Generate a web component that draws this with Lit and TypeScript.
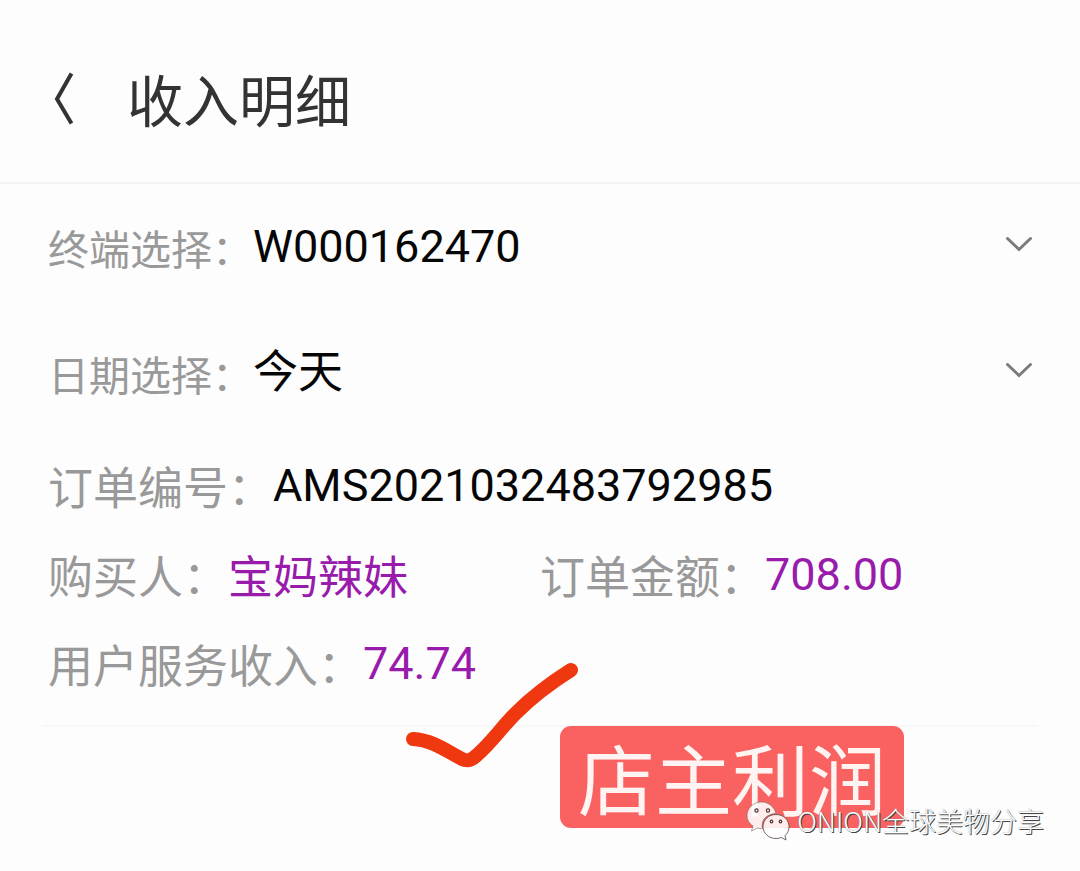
import { LitElement, html, css } from "lit";
import { customElement, property, state } from "lit/decorators.js";

const latinFirst = css`Roboto, "Noto Sans CJK SC", sans-serif`;
const chineseFirst = css`"Noto Sans CJK SC", sans-serif`;

@customElement("filter-select")
class FilterSelect extends LitElement {
  @property() label = "";
  @property({ attribute: false }) options: string[] = [];

  static styles = css`
    :host {
      display: block;
    }
    .row {
      position: relative;
      display: flex;
      align-items: center;
      height: 60px;
    }
    .label {
      flex: none;
      font: 41px/60px ${chineseFirst};
      color: #999;
    }
    .select {
      flex: 1;
      min-width: 0;
      height: 60px;
      margin: 0;
      padding: 0 60px 0 0;
      border: 0;
      background: none;
      appearance: none;
      font: 45px/60px ${latinFirst};
      color: #060606;
    }
    .chevron {
      position: absolute;
      right: 0;
      top: 18px;
      width: 30px;
      height: 18px;
      pointer-events: none;
    }
  `;

  render() {
    return html`
      <div class="row">
        <label class="label" for="field">${this.label}：</label>
        <select class="select" id="field">
          ${this.options.map((o) => html`<option>${o}</option>`)}
        </select>
        <svg class="chevron" viewBox="0 0 30 18" aria-hidden="true">
          <path d="M3.5 3.5 15 14.5 26.5 3.5" fill="none" stroke="#7b7b7b" stroke-width="3" stroke-linecap="round" />
        </svg>
      </div>
    `;
  }
}

@customElement("app-root")
class AppRoot extends LitElement {
  @state() private order = {
    id: "AMS2021032483792985",
    buyer: "宝妈辣妹",
    amount: "708.00",
    income: "74.74",
  };

  static styles = css`
    :host {
      display: block;
      position: relative;
      min-height: 100vh;
      box-sizing: border-box;
      overflow: hidden;
      background: #fdfdfd;
      font-family: ${latinFirst};
    }
    .header {
      display: flex;
      align-items: center;
      gap: 49px;
      height: 182px;
      padding: 0 48px;
      border-bottom: 2px solid #f4f4f4;
    }
    .back {
      margin: 16px 0 0;
      padding: 0;
      border: 0;
      background: none;
      width: 30px;
      height: 60px;
    }
    .back-icon {
      display: block;
      width: 30px;
      height: 60px;
    }
    .title {
      margin: 14px 0 0;
      font: 400 56px/72px ${chineseFirst};
      color: #333;
    }
    .filters {
      display: flex;
      flex-direction: column;
      gap: 66px;
      padding: 33px 46px 0 48px;
    }
    .order {
      position: relative;
      display: flex;
      flex-direction: column;
      gap: 29px;
      margin: 53px 42px 0;
      padding: 0 6px 31px;
      border-bottom: 2px solid #f7f7f7;
      font-size: 45px;
      line-height: 60px;
      color: #060606;
    }
    .line {
      display: grid;
      grid-template-columns: 1fr 1fr;
    }
    .pair {
      display: flex;
      align-items: center;
      height: 60px;
      margin: 0;
      white-space: nowrap;
    }
    .key {
      font-family: ${chineseFirst};
      color: #999;
    }
    .accent {
      color: #981bac;
    }
    .name {
      font-family: ${chineseFirst};
    }
    .tick {
      position: absolute;
      left: 360px;
      top: 200px;
      width: 180px;
      height: 116px;
    }
    .badge {
      position: absolute;
      left: 518px;
      top: 270px;
      padding: 0 18px;
      border-radius: 11px;
      background: #fa6161;
      color: #fff4f1;
      font: 400 77px/102px ${chineseFirst};
      white-space: nowrap;
    }
    .watermark {
      position: absolute;
      right: 36px;
      top: 799px;
      display: flex;
      align-items: center;
      gap: 7px;
      font: 300 27px/44px ${chineseFirst};
      color: #fff;
      text-shadow: 1px 1px 0 #444, 0 0 1px #777;
      white-space: nowrap;
    }
    .wechat {
      width: 44px;
      height: 42px;
    }
  `;

  render() {
    const o = this.order;
    return html`
      <header class="header">
        <button class="back" aria-label="返回">
          <svg class="back-icon" viewBox="0 0 30 60" aria-hidden="true">
            <path d="M23.5 4.5 9 30 23.500 54.500" fill="none" stroke="#333" stroke-width="4" />
          </svg>
        </button>
        <h1 class="title">收入明细</h1>
      </header>
      <section class="filters">
        <filter-select label="终端选择" .options=${["W000162470"]}></filter-select>
        <filter-select label="日期选择" .options=${["今天"]}></filter-select>
      </section>
      <section class="order">
        <p class="pair"><span class="key">订单编号：</span><span>${o.id}</span></p>
        <div class="line">
          <p class="pair"><span class="key">购买人：</span><span class="accent name">${o.buyer}</span></p>
          <p class="pair"><span class="key">订单金额：</span><span class="accent">${o.amount}</span></p>
        </div>
        <p class="pair"><span class="key">用户服务收入：</span><span class="accent">${o.income}</span></p>
        <svg class="tick" viewBox="0 0 180 116" aria-hidden="true">
          <path
            d="M11 83C31 84 46 96 60 103C66 106 70 104 75 99C89 87 99 72 114 57C131 40 150 26 169 14"
            fill="none" stroke="#ef3710" stroke-width="14" stroke-linecap="round" stroke-linejoin="round"
          />
        </svg>
        <span class="badge">店主利润</span>
      </section>
      <div class="watermark">
        <svg class="wechat" viewBox="0 0 44 42" aria-hidden="true">
          <path
            d="M15.500 2C7.500 2 1 8 1 15.500C1 20 3.200 23.500 7 26L5.500 31L11.500 28C13 28.400 14.500 28.700 16.500 28.700C14.500 19.500 21 14 30 13.500C28.500 7 22.500 2 15.500 2Z"
            fill="#fff" fill-opacity=".88" stroke="#765" stroke-width=".6"
          />
          <path
            d="M30 14.500C22.500 14.500 17 20 17 26.500C17 33.500 23 38.500 30 38.500C32 38.500 34 38 35.500 37.500L40 40L39 35.500C41.500 33.500 43 30.500 43 26.500C43 20 37.500 14.500 30 14.500Z"
            fill="#fff" fill-opacity=".88" stroke="#544" stroke-width=".8"
          />
          <g fill="#fff" stroke="#533" stroke-width="1.200">
            <circle cx="10.500" cy="10.500" r="1.600" />
            <circle cx="22" cy="10.500" r="1.600" />
            <circle cx="25.500" cy="21.500" r="1.300" />
            <circle cx="34.500" cy="21.500" r="1.300" />
          </g>
        </svg>
        <span>ONION全球美物分享</span>
      </div>
    `;
  }
}
